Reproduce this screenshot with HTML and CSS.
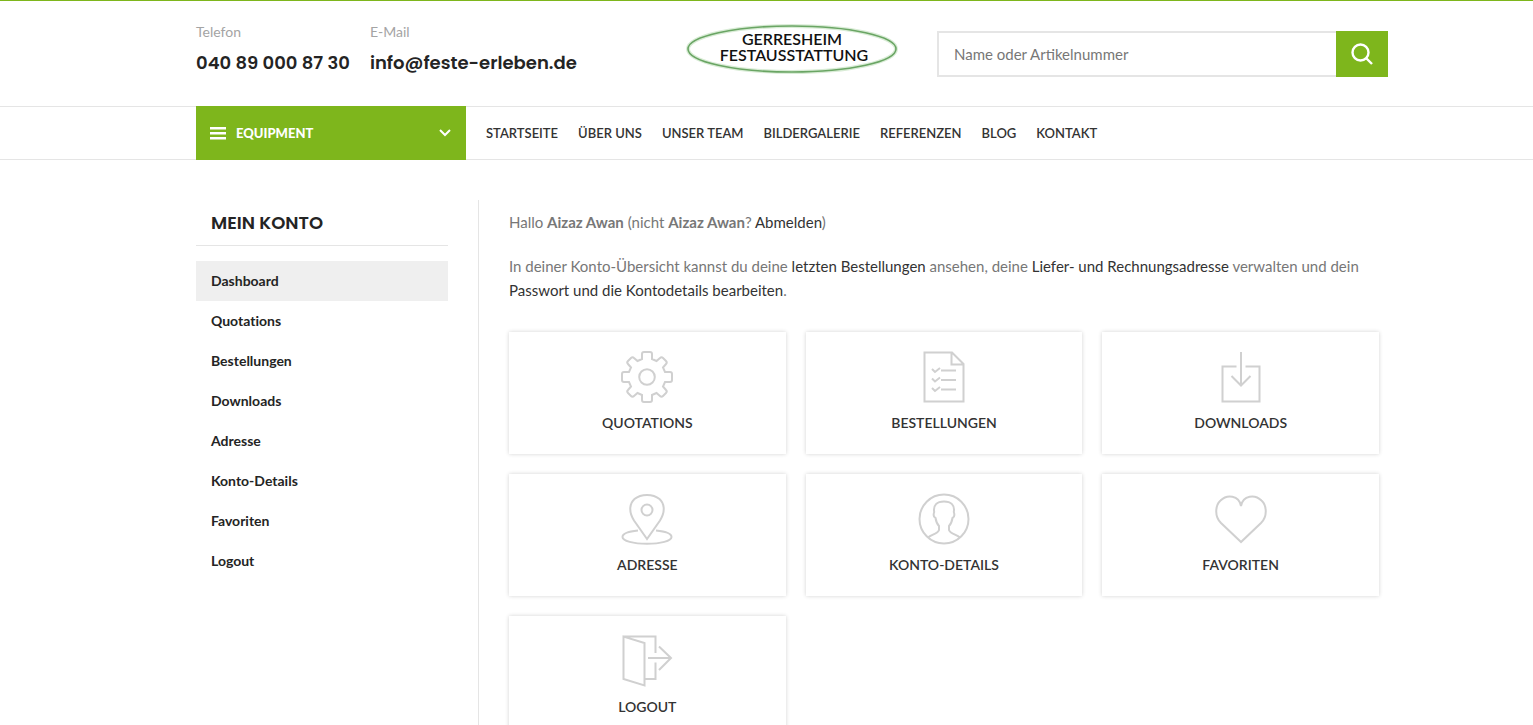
FILE: index.html
```
<!DOCTYPE html>
<html lang="de">
<head>
  <meta charset="UTF-8">
  <meta name="viewport" content="width=device-width, initial-scale=1.0">
  <title>Mein Konto - Gerresheim Festausstattung</title>
  <link rel="stylesheet" href="styles.css">
</head>
<body>
  <header class="site-header">
    <div class="container header-top">
      <div class="contact">
        <div class="contact-item">
          <span class="contact-label">Telefon</span>
          <a class="contact-value" href="tel:+4940890008730">040 89 000 87 30</a>
        </div>
        <div class="contact-item">
          <span class="contact-label">E-Mail</span>
          <a class="contact-value" href="mailto:info@feste-erleben.de">info@feste-erleben.de</a>
        </div>
      </div>
      <a class="logo" href="#" aria-label="Gerresheim Festausstattung">
        <svg width="212" height="50" viewBox="0 0 212 50">
          <ellipse cx="106" cy="25" rx="104" ry="23" fill="none" stroke="#d9ecd6" stroke-width="4"/>
          <ellipse cx="106" cy="25" rx="104" ry="23" fill="none" stroke="#6aa564" stroke-width="1.600"/>
          <text x="106" y="21" text-anchor="middle">GERRESHEIM</text>
          <text x="108" y="37" text-anchor="middle">FESTAUSSTATTUNG</text>
        </svg>
      </a>
      <form class="search" role="search">
        <input type="text" name="s" placeholder="Name oder Artikelnummer" aria-label="Name oder Artikelnummer">
        <button type="submit" aria-label="Suchen">
          <svg width="22" height="22" viewBox="0 0 22 22" fill="none" stroke="#fff" stroke-width="2.4">
            <circle cx="9.5" cy="9.5" r="8"/>
            <path d="M15 15l6 6"/>
          </svg>
        </button>
      </form>
    </div>
    <div class="header-bottom">
      <div class="container nav-row">
        <button type="button" class="equipment-btn">
          <svg width="16" height="13" viewBox="0 0 16 13" fill="#fff">
            <path d="M0 0h16v2.500H0zM0 5h16v2.500H0zM0 10h16v2.500H0z"/>
          </svg>
          <span>Equipment</span>
          <svg class="chevron" width="12" height="8" viewBox="0 0 12 8" fill="none" stroke="#fff" stroke-width="2">
            <path d="M1 1l5 5 5-5"/>
          </svg>
        </button>
        <nav class="main-nav">
          <a href="#">Startseite</a>
          <a href="#">Über uns</a>
          <a href="#">Unser Team</a>
          <a href="#">Bildergalerie</a>
          <a href="#">Referenzen</a>
          <a href="#">Blog</a>
          <a href="#">Kontakt</a>
        </nav>
      </div>
    </div>
  </header>

  <main class="container account">
    <aside class="sidebar">
      <h3>Mein Konto</h3>
      <nav class="account-nav">
        <a class="active" href="#">Dashboard</a>
        <a href="#">Quotations</a>
        <a href="#">Bestellungen</a>
        <a href="#">Downloads</a>
        <a href="#">Adresse</a>
        <a href="#">Konto-Details</a>
        <a href="#">Favoriten</a>
        <a href="#">Logout</a>
      </nav>
    </aside>
    <section class="content">
      <p>Hallo <strong>Aizaz Awan</strong> (nicht <strong>Aizaz Awan</strong>? <a href="#">Abmelden</a>)</p>
      <p>In deiner Konto-Übersicht kannst du deine <a href="#">letzten Bestellungen</a> ansehen, deine <a href="#">Liefer- und Rechnungsadresse</a> verwalten und dein <a href="#">Passwort und die Kontodetails bearbeiten</a>.</p>
      <div class="cards">
        <a class="card" href="#">
          <svg viewBox="0 0 52 52">
            <path d="M21 3q0-2 2-2h6q2 0 2 2v5l4.500 2 3.500-3q1.500-1.500 3 0l3 3q1.500 1.500 0 3l-3 3.500 2 4.500h5q2 0 2 2v6q0 2-2 2h-5l-2 4.500 3 3.500q1.500 1.500 0 3l-3 3q-1.500 1.500-3 0l-3.500-3-4.500 2v5q0 2-2 2h-6q-2 0-2-2v-5l-4.500-2-3.500 3q-1.500 1.500-3 0l-3-3q-1.500-1.500 0-3l3-3.500-2-4.500h-5q-2 0-2-2v-6q0-2 2-2h5l2-4.500-3-3.500q-1.500-1.500 0-3l3-3q1.500-1.500 3 0l3.500 3 4.500-2z"/>
            <circle cx="26" cy="26" r="7.800"/>
          </svg>
          <span>Quotations</span>
        </a>
        <a class="card" href="#">
          <svg viewBox="0 0 52 52">
            <path d="M6.500 1.500H34L45.500 13v37.500h-39zM33.500 1.500v12h12"/>
            <path d="M14 18l3 3 5-4M14 27.500l3 3 5-4M14 37l3 3 5-4M23 19.500h15M23 29h15M23 38.500h15"/>
          </svg>
          <span>Bestellungen</span>
        </a>
        <a class="card" href="#">
          <svg viewBox="0 0 52 52">
            <path d="M21.500 15.500h-14v35h37v-35h-14M26 1v33M16.500 25l9.500 9.500 9.500-9.500"/>
          </svg>
          <span>Downloads</span>
        </a>
        <a class="card" href="#">
          <svg viewBox="0 0 52 52">
            <path d="M26 46L13 27.500C7 18 9 10 13.500 6 20 .5 32 .5 38.500 6 43 10 45 18 39 27.500z"/>
            <circle cx="26" cy="17" r="5.500"/>
            <path d="M17 37.500C7 38.500 1.500 41 1.500 44c0 4 11 6.800 24.500 6.800S50.500 48 50.500 44c0-3-5.500-5.500-15.500-6.500"/>
          </svg>
          <span>Adresse</span>
        </a>
        <a class="card" href="#">
          <svg viewBox="0 0 52 52">
            <circle cx="26" cy="26" r="24.500"/>
            <path d="M10 44.500c4-3 10-4 11-7.500v-4c-2-2-3-5-3.500-8-2-1-2-4-1.300-6C15 12 19 8.500 26 8.500S37 12 35.800 19c.7 2 .7 5-1.300 6-.5 3-1.500 6-3.500 8v4c1 3.500 7 4.500 11 7.500"/>
          </svg>
          <span>Konto-Details</span>
        </a>
        <a class="card" href="#">
          <svg viewBox="0 0 52 52">
            <path d="M26 49L6 30C-1 23 .5 12 5.500 7.500 12 1 24 2 26 13 28 2 40 1 46.500 7.500 51.500 12 53 23 46 30z"/>
          </svg>
          <span>Favoriten</span>
        </a>
        <a class="card" href="#">
          <svg viewBox="0 0 52 52">
            <path d="M2.500 1.500v42.500l21 6.500V8zM2.500 1.500h32V18M34.500 27.500V44h-11M27 23h23M38 11.500L50 23 38 35"/>
          </svg>
          <span>Logout</span>
        </a>
      </div>
    </section>
  </main>
</body>
</html>
```
FILE: styles.css
```
* {
  box-sizing: border-box;
}
body {
  margin: 0;
  background: #fff;
  color: #777;
  font-family: Lato, Arial, sans-serif;
  font-size: 15px;
  line-height: 24px;
  font-variant-ligatures: none;
}
a {
  color: #333;
  text-decoration: none;
}
button {
  border: none;
  background: #7eb61c;
  color: #fff;
  font-family: inherit;
  cursor: pointer;
}
.container {
  padding: 0 145px 0 196px;
}
.site-header {
  border-top: 1px solid #7eb61c;
}
.header-top {
  display: flex;
  align-items: flex-start;
  height: 105px;
}
.contact {
  display: flex;
  gap: 20px;
  padding-top: 19px;
}
.contact-label {
  display: block;
  color: #a4a4a4;
  font-size: 14px;
}
.contact-value {
  display: block;
  margin-top: 7px;
  color: #242424;
  font-family: Poppins, Inter, sans-serif;
  font-size: 18px;
  font-weight: 600;
  white-space: nowrap;
}
.logo {
  margin-left: auto;
  padding-top: 23px;
}
.logo svg {
  display: block;
}
.logo text {
  font-family: Lato, sans-serif;
  font-size: 16px;
  font-weight: 600;
  fill: #111;
}
.search {
  display: flex;
  width: 451px;
  height: 46px;
  margin: 30px 0 0 39px;
}
.search input {
  flex: 1;
  min-width: 0;
  padding: 0 15px;
  border: 2px solid #e5e5e5;
  border-right: none;
  border-radius: 0;
  font-family: inherit;
  font-size: 15px;
  outline: none;
}
.search input::placeholder {
  color: #777;
}
.search button {
  display: flex;
  align-items: center;
  justify-content: center;
  width: 52px;
}
.header-bottom {
  border-top: 1px solid #e5e5e5;
  border-bottom: 1px solid #e5e5e5;
}
.nav-row {
  display: flex;
  align-items: center;
}
.equipment-btn {
  display: flex;
  align-items: center;
  gap: 10px;
  width: 270px;
  height: 54px;
  margin: -1px 0;
  padding: 0 15px 0 14px;
  font-size: 13px;
  font-weight: 900;
  text-transform: uppercase;
}
.equipment-btn .chevron {
  margin-left: auto;
}
.main-nav {
  display: flex;
  gap: 20px;
  margin-left: 20px;
}
.main-nav a {
  font-size: 13px;
  font-weight: 600;
  text-transform: uppercase;
  white-space: nowrap;
}
.account {
  display: flex;
  padding-top: 40px;
}
.sidebar {
  flex: none;
  width: 283px;
  padding-right: 30px;
  border-right: 1px solid #e5e5e5;
}
.sidebar h3 {
  margin: 0 0 15px;
  padding: 10px 15px;
  border-bottom: 1px solid #e5e5e5;
  color: #242424;
  font-family: Poppins, Inter, sans-serif;
  font-size: 18px;
  font-weight: 600;
  line-height: 25px;
  text-transform: uppercase;
}
.account-nav a {
  display: block;
  padding: 8px 15px;
  color: #242424;
  font-size: 14px;
  font-weight: 700;
}
.account-nav a.active {
  background: #efefef;
}
.content {
  flex: 1;
  padding: 10px 9px 40px 30px;
}
.content p {
  margin: 0 0 20px;
}
.cards {
  display: grid;
  grid-template-columns: repeat(3, 1fr);
  gap: 20px;
  margin-top: 30px;
}
.card {
  display: flex;
  flex-direction: column;
  align-items: center;
  gap: 8px;
  padding: 19px 15px;
  box-shadow: 0 0 4px rgba(0, 0, 0, 0.18);
  font-size: 14px;
  font-weight: 600;
  text-transform: uppercase;
}
.card svg {
  width: 52px;
  height: 52px;
  fill: none;
  stroke: #d0d0d0;
  stroke-width: 2;
}
```
